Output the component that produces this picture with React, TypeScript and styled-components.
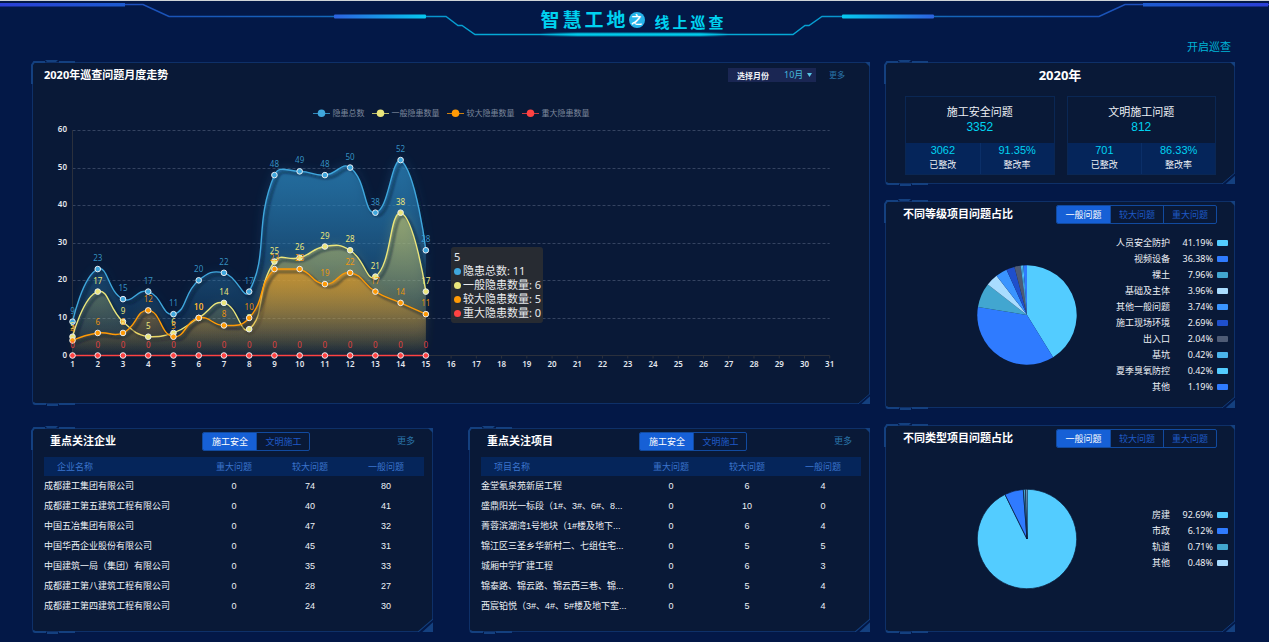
import React, { useState } from "react";
import styled, { createGlobalStyle, css } from "styled-components";

const cjk = `"Noto Sans", "Noto Sans CJK SC", sans-serif`;
const arial = `"Liberation Sans", "Noto Sans CJK SC", sans-serif`;

const color = {
  page: "#031847",
  panel: "#091937",
  edge: "#0e3068",
  accent: "#14407f",
  primary: "#1660d6",
  outline: "#114a9f",
  band: "#05255a",
  cyan: "#00d2f0",
  link: "#2a74a8",
  text: "#eef1f6",
};

const GlobalStyle = createGlobalStyle`
  *, *::before, *::after { box-sizing: border-box; }
  body {
    margin: 0;
    background: ${color.page};
    color: ${color.text};
    font-family: ${cjk};
    font-size: 9px;
  }
  h1, h2, ul, p { margin: 0; padding: 0; }
  ul { list-style: none; }
  a { text-decoration: none; }
  button, select { font-family: inherit; }
`;

/* ---------- page header ---------- */

const Header = styled.header`
  position: relative;
  height: 38px;
  border-top: 1px solid #cfd4d8;
`;

const HeaderLines = styled.svg`
  position: absolute;
  top: -1px;
  left: 0;
  width: 100%;
  height: 44px;
`;

const SiteTitle = styled.h1`
  position: relative;
  display: flex;
  justify-content: center;
  align-items: center;
  height: 38px;
  padding-right: 2px;
  color: ${color.cyan};
  font-size: 19px;
  line-height: 38px;
  font-weight: 700;
  letter-spacing: 3px;
`;

const Badge = styled.span`
  width: 16px;
  height: 16px;
  border-radius: 50%;
  background: #27b4ea;
  color: #fff;
  font-size: 11px;
  line-height: 15px;
  letter-spacing: 0;
  text-align: center;
`;

const SubTitle = styled.span`
  margin-left: 10px;
  padding-top: 3px;
  font-size: 15px;
`;

const TopNav = styled.nav`
  display: flex;
  justify-content: flex-end;
  height: 24px;
  padding: 0 38px;
`;

const StartLink = styled.a`
  color: #00b4d6;
  font-size: 11px;
  line-height: 18px;
`;

/* ---------- layout ---------- */

const Main = styled.main`
  display: grid;
  grid-template-columns: minmax(0, 838fr) minmax(0, 350fr);
  gap: 15px;
  padding: 0 34px 10px 32px;
`;

const LeftColumn = styled.div`
  display: flex;
  flex-direction: column;
  gap: 24px;
`;

const RightColumn = styled.div`
  display: flex;
  flex-direction: column;
  gap: 17px;
`;

const TablePair = styled.div`
  display: grid;
  grid-template-columns: repeat(2, minmax(0, 1fr));
  gap: 36px;
`;

/* ---------- panel ---------- */

const PanelBox = styled.section<{ $grow?: boolean }>`
  position: relative;
  display: flex;
  flex-direction: column;
  border-radius: 3px;
  background: ${color.panel};
  box-shadow: inset 0 0 0 1px ${color.edge};
  ${(p) => p.$grow && css`flex: 1;`}
`;

const Ornament = styled.svg<{ $at: "top" | "bottom" | "tip" | "cut" }>`
  position: absolute;
  pointer-events: none;
  ${(p) =>
    ({
      top: "top: -3px; left: -1px;",
      bottom: "bottom: -3px; left: 0;",
      tip: "top: 0; right: 0;",
      cut: "bottom: 0; right: 0;",
    })[p.$at]}
`;

function Panel({
  children,
  grow,
  cut = 12,
}: {
  children: React.ReactNode;
  grow?: boolean;
  cut?: number;
}) {
  return (
    <PanelBox $grow={grow}>
      <Ornament $at="top" width="50" height="28" aria-hidden>
        <path
          d="M1 25V6l2-3H14M28 3H44"
          fill="none"
          stroke={color.accent}
          strokeWidth="2"
        />
        <path d="M14 1H27L25 3H16Z" fill={color.accent} />
      </Ornament>
      <Ornament $at="bottom" width="48" height="6" aria-hidden>
        <path d="M1 2l2 1H14M27 3H43" fill="none" stroke={color.accent} strokeWidth="2" />
        <path d="M15 3H26V5H15Z" fill={color.accent} />
      </Ornament>
      <Ornament $at="tip" width="5" height="5" aria-hidden>
        <path d="M0 0H5V5Z" fill={color.accent} />
      </Ornament>
      {children}
      <Ornament $at="cut" width={cut} height={cut} viewBox="0 0 14 14" aria-hidden>
        <path d="M0 14L14 2V14Z" fill={color.page} />
        <path d="M0 14L14 2" stroke={color.accent} fill="none" />
        <path d="M4 14L14 5V14Z" fill={color.accent} />
      </Ornament>
    </PanelBox>
  );
}

const PanelHead = styled.div<{ $wide?: boolean }>`
  display: flex;
  align-items: center;
  justify-content: space-between;
  height: 26px;
  padding: ${(p) => (p.$wide ? "0 25px 0 12px" : "0 18px")};
`;

const PanelTitle = styled.h2`
  color: #fff;
  font-size: 11px;
  line-height: 18px;
  font-weight: 700;
`;

const MoreLink = styled.a<{ $small?: boolean }>`
  color: ${color.link};
  font-size: ${(p) => (p.$small ? 8 : 9)}px;
  line-height: 14px;
`;

const TabGroup = styled.div`
  display: flex;
  height: 19px;
  border: 1px solid ${color.outline};
  border-radius: 2px;
  overflow: hidden;
`;

const Tab = styled.button<{ $active: boolean }>`
  width: 53px;
  padding: 0;
  border: 0;
  border-left: 1px solid ${color.outline};
  background: ${(p) => (p.$active ? color.primary : "transparent")};
  color: ${(p) => (p.$active ? "#fff" : "#1f5ac6")};
  font-size: 9px;
  line-height: 17px;
  &:first-child {
    border-left: 0;
  }
`;

function Tabs({ items, label }: { items: string[]; label: string }) {
  const [active, setActive] = useState(0);
  return (
    <TabGroup role="group" aria-label={label}>
      {items.map((t, i) => (
        <Tab
          key={t}
          type="button"
          $active={i === active}
          aria-pressed={i === active}
          onClick={() => setActive(i)}
        >
          {t}
        </Tab>
      ))}
    </TabGroup>
  );
}

/* ---------- trend chart ---------- */

const HeadTools = styled.div`
  display: flex;
  align-items: center;
  gap: 13px;
`;

const MonthField = styled.div`
  position: relative;
  display: flex;
  align-items: center;
  justify-content: space-between;
  width: 88px;
  height: 14px;
  padding-left: 9px;
  background: #1a2653;
`;

const MonthLabel = styled.label`
  color: #f2f4f8;
  font-size: 8px;
  font-weight: 700;
`;

const MonthSelect = styled.select`
  appearance: none;
  width: 32px;
  height: 14px;
  padding: 0;
  border: 0;
  background: transparent;
  color: #45b8dc;
  font-size: 9px;
  line-height: 14px;
`;

const Caret = styled.svg`
  position: absolute;
  top: 5px;
  right: 4px;
  pointer-events: none;
`;

const LegendRow = styled.ul`
  display: flex;
  justify-content: center;
  gap: 7px;
  height: 14px;
  margin-top: 18px;
  color: #7c879c;
  font-size: 8px;
  line-height: 14px;
`;

const LegendItem = styled.li`
  display: flex;
  align-items: center;
  gap: 3px;
`;

const ChartArea = styled.div`
  position: relative;
  padding-bottom: 24px;
`;

const ChartSvg = styled.svg`
  display: block;
  width: 100%;
  height: auto;
  font-family: ${cjk};
  font-size: 8px;
`;

const Tooltip = styled.div`
  position: absolute;
  top: 127px;
  left: 50%;
  padding: 3px 2px 3px 3px;
  border-radius: 3px;
  background: rgba(44, 46, 50, 0.86);
  color: #e8eaed;
  font-size: 11px;
  line-height: 14px;
  white-space: nowrap;
`;

const TipRow = styled.p`
  display: flex;
  align-items: center;
  gap: 2px;
`;

const Dot = styled.span<{ $color: string }>`
  width: 7px;
  height: 7px;
  border-radius: 50%;
  background: ${(p) => p.$color};
`;

const series = [
  {
    name: "隐患总数",
    color: "#3fa7dd",
    top: "#2c88c0",
    opacity: 0.7,
    labelOpacity: 0.85,
    tip: 11,
    data: [9, 23, 15, 17, 11, 20, 22, 17, 48, 49, 48, 50, 38, 52, 28],
  },
  {
    name: "一般隐患数量",
    color: "#ebe67b",
    top: "#d9cf62",
    opacity: 0.54,
    labelOpacity: 1,
    tip: 6,
    data: [5, 17, 9, 5, 6, 10, 14, 7, 25, 26, 29, 28, 21, 38, 17],
  },
  {
    name: "较大隐患数量",
    color: "#ff9a05",
    top: "#e8981c",
    opacity: 0.62,
    labelOpacity: 0.9,
    tip: 5,
    data: [4, 6, 6, 12, 5, 10, 8, 10, 23, 23, 19, 22, 17, 14, 11],
  },
  {
    name: "重大隐患数量",
    color: "#ff4242",
    top: "#ff4242",
    opacity: 0,
    labelOpacity: 0.85,
    tip: 0,
    data: [0, 0, 0, 0, 0, 0, 0, 0, 0, 0, 0, 0, 0, 0, 0],
  },
];

const plot = { left: 40.5, step: 25.24, base: 235.5, top: 10, right: 797.7 };
const px = (i: number) => plot.left + i * plot.step;
const py = (v: number) => plot.base - (v * (plot.base - plot.top)) / 60;

/* Smooth curve through the points, with handles kept inside the series' bounds. */
function smoothPath(data: number[]) {
  const pts = data.map((v, i) => [px(i), py(v)]);
  const ys = pts.map((p) => p[1]);
  const lo = Math.min(...ys);
  const hi = Math.max(...ys);
  const clamp = (y: number) => Math.max(lo, Math.min(hi, y));
  const f = (n: number) => n.toFixed(2);
  let d = `M${f(pts[0][0])} ${f(pts[0][1])}`;
  let out = pts[0];
  for (let i = 1; i < pts.length; i++) {
    const prev = pts[i - 1];
    const p = pts[i];
    const next = pts[i + 1];
    let inn = p;
    let nextOut = p;
    if (next) {
      const v = [next[0] - prev[0], next[1] - prev[1]];
      const a = Math.hypot(p[0] - prev[0], p[1] - prev[1]);
      const b = Math.hypot(next[0] - p[0], next[1] - p[1]);
      const r = b / (a + b);
      inn = [p[0] - v[0] * 0.5 * (1 - r), clamp(p[1] - v[1] * 0.5 * (1 - r))];
      nextOut = [p[0] + v[0] * 0.5 * r, clamp(p[1] + v[1] * 0.5 * r)];
    }
    d += `C${f(out[0])} ${f(out[1])} ${f(inn[0])} ${f(inn[1])} ${f(p[0])} ${f(p[1])}`;
    out = nextOut;
  }
  return d;
}

function TrendChart() {
  return (
    <ChartSvg viewBox="0 0 838 260" role="img" aria-label="2020年巡查问题月度走势">
      <defs>
        {series.map((s, i) => (
          <linearGradient key={s.name} id={`fill${i}`} x1="0" y1="0" x2="0" y2="1">
            <stop offset="0" stopColor={s.top} stopOpacity={s.opacity} />
            <stop offset="1" stopColor={s.top} stopOpacity="0.02" />
          </linearGradient>
        ))}
        <filter id="glow" x="-10%" y="-20%" width="120%" height="140%">
          <feGaussianBlur stdDeviation="6" />
        </filter>
        <filter id="soft" x="-5%" y="-10%" width="110%" height="120%">
          <feGaussianBlur stdDeviation="0.8" />
        </filter>
      </defs>
      {[10, 20, 30, 40, 50, 60].map((v) => (
        <line
          key={v}
          x1={plot.left}
          x2={plot.right}
          y1={Math.round(py(v)) + 0.5}
          y2={Math.round(py(v)) + 0.5}
          stroke="#344360"
          strokeDasharray="3 2"
        />
      ))}
      <path
        d={`M${plot.left} ${plot.top}V${plot.base}H${plot.right}`}
        fill="none"
        stroke="#2b303c"
      />
      {Array.from({ length: 31 }, (_, i) => (
        <line
          key={i}
          x1={px(i)}
          x2={px(i)}
          y1={plot.base}
          y2={plot.base + 3}
          stroke="#2b303c"
        />
      ))}
      <g fill="#e3e7ee" fontWeight="600">
        {[0, 10, 20, 30, 40, 50, 60].map((v) => (
          <text key={v} x="35" y={py(v) + 2} textAnchor="end">
            {v}
          </text>
        ))}
        {Array.from({ length: 31 }, (_, i) => (
          <text key={i} x={px(i)} y="247" textAnchor="middle">
            {i + 1}
          </text>
        ))}
      </g>
      {series.map((s, i) => {
        const line = smoothPath(s.data);
        const area = `${line}V${plot.base}H${plot.left}Z`;
        return (
          <g key={s.name}>
            {s.opacity > 0 && (
              <>
                <path d={area} fill={`url(#fill${i})`} filter="url(#glow)" opacity="0.4" />
                <path d={area} fill={`url(#fill${i})`} />
                <path
                  d={line}
                  transform="translate(3 3)"
                  fill="none"
                  stroke="#081430"
                  strokeOpacity="0.55"
                  strokeWidth="2"
                  filter="url(#soft)"
                />
              </>
            )}
            <path d={line} fill="none" stroke={s.color} strokeWidth="1.4" />
          </g>
        );
      })}
      {series.map((s) => (
        <g key={s.name} textAnchor="middle">
          {s.data.map((v, i) => (
            <g key={i}>
              <circle
                cx={px(i)}
                cy={py(v)}
                r="2.8"
                fill={s.color}
                stroke="#e9edf2"
                strokeWidth="1"
              />
              <text x={px(i)} y={py(v) - 8} fill={s.color} fillOpacity={s.labelOpacity}>
                {v}
              </text>
            </g>
          ))}
        </g>
      ))}
    </ChartSvg>
  );
}

/* ---------- tables ---------- */

const DataTable = styled.table`
  width: calc(100% - 21px);
  margin: 3px 9px 16px 12px;
  border-collapse: collapse;
  table-layout: fixed;
  font-family: ${arial};
  font-size: 9px;
`;

const HeadCell = styled.th<{ $first?: boolean }>`
  width: ${(p) => (p.$first ? "40%" : "20%")};
  height: 19px;
  padding: 0 0 0 ${(p) => (p.$first ? 13 : 0)}px;
  background: ${color.band};
  color: #3b74cc;
  font-weight: 400;
  text-align: ${(p) => (p.$first ? "left" : "center")};
`;

const Cell = styled.td<{ $first?: boolean }>`
  height: 20px;
  padding: 0;
  color: ${color.text};
  line-height: 14px;
  text-align: ${(p) => (p.$first ? "left" : "center")};
  white-space: nowrap;
`;

type Row = [string, number, number, number];

const companies: Row[] = [
  ["成都建工集团有限公司", 0, 74, 80],
  ["成都建工第五建筑工程有限公司", 0, 40, 41],
  ["中国五冶集团有限公司", 0, 47, 32],
  ["中国华西企业股份有限公司", 0, 45, 31],
  ["中国建筑一局（集团）有限公司", 0, 35, 33],
  ["成都建工第八建筑工程有限公司", 0, 28, 27],
  ["成都建工第四建筑工程有限公司", 0, 24, 30],
];

const projects: Row[] = [
  ["金堂氡泉苑新居工程", 0, 6, 4],
  ["盛鼎阳光一标段（1#、3#、6#、8...", 0, 10, 0],
  ["菁蓉滨湖湾1号地块（1#楼及地下...", 0, 6, 4],
  ["锦江区三圣乡华新村二、七组住宅...", 0, 5, 5],
  ["城厢中学扩建工程", 0, 6, 3],
  ["锦泰路、锦云路、锦云西三巷、锦...", 0, 5, 4],
  ["西宸铂悦（3#、4#、5#楼及地下室...", 0, 5, 4],
];

function FocusTable({ title, nameLabel, rows }: { title: string; nameLabel: string; rows: Row[] }) {
  return (
    <Panel cut={15}>
      <PanelHead>
        <PanelTitle>{title}</PanelTitle>
        <Tabs items={["施工安全", "文明施工"]} label={title} />
        <MoreLink href="#more">更多</MoreLink>
      </PanelHead>
      <DataTable>
        <thead>
          <tr>
            <HeadCell scope="col" $first>
              {nameLabel}
            </HeadCell>
            <HeadCell scope="col">重大问题</HeadCell>
            <HeadCell scope="col">较大问题</HeadCell>
            <HeadCell scope="col">一般问题</HeadCell>
          </tr>
        </thead>
        <tbody>
          {rows.map(([name, ...counts]) => (
            <tr key={name}>
              <Cell $first>{name}</Cell>
              {counts.map((c, i) => (
                <Cell key={i}>{c}</Cell>
              ))}
            </tr>
          ))}
        </tbody>
      </DataTable>
    </Panel>
  );
}

/* ---------- yearly figures ---------- */

const YearTitle = styled.h2`
  padding-top: 3px;
  color: #fff;
  font-size: 13px;
  line-height: 20px;
  font-weight: 700;
  text-align: center;
`;

const CardRow = styled.div`
  display: grid;
  grid-template-columns: 1fr 1fr;
  gap: 12px;
  padding: 11px 19px 9px 20px;
`;

const Card = styled.div`
  border: 1px solid #0a2754;
  text-align: center;
  font-family: ${arial};
`;

const CardTop = styled.div`
  height: 46px;
  padding-top: 7px;
  font-size: 11px;
  line-height: 16px;
`;

const CardTotal = styled.p`
  color: ${color.cyan};
  font-size: 12px;
  line-height: 15px;
`;

const CardFoot = styled.div`
  display: grid;
  grid-template-columns: 1fr 1fr;
  background: ${color.band};
`;

const Figure = styled.div`
  height: 31px;
  font-size: 9px;
  line-height: 16px;
  & + & {
    border-left: 1px solid #0b2f68;
  }
`;

const FigureValue = styled.p`
  color: ${color.cyan};
  font-size: 11px;
  line-height: 14px;
`;

const cards = [
  { name: "施工安全问题", total: "3352", fixed: "3062", rate: "91.35%" },
  { name: "文明施工问题", total: "812", fixed: "701", rate: "86.33%" },
];

/* ---------- pies ---------- */

const PieBody = styled.div`
  display: flex;
  flex: 1;
  align-items: center;
  justify-content: flex-end;
  padding-right: 7px;
  margin-top: -5px;
`;

const PieSvg = styled.svg`
  flex: none;
  width: 100px;
  height: 100px;
`;

const PieLegend = styled.ul`
  width: 151px;
`;

const PieLegendItem = styled.li`
  display: grid;
  grid-template-columns: 1fr 39px 11px;
  column-gap: 4px;
  align-items: center;
  font-size: 9px;
  line-height: 16px;
  text-align: right;
`;

const Swatch = styled.span<{ $color: string }>`
  height: 6px;
  border-radius: 1px;
  background: ${(p) => p.$color};
`;

type Slice = { name: string; value: number; color: string };

const byLevel: Slice[] = [
  { name: "人员安全防护", value: 41.19, color: "#53ccff" },
  { name: "视频设备", value: 36.38, color: "#2f7bff" },
  { name: "裸土", value: 7.96, color: "#42a6d0" },
  { name: "基础及主体", value: 3.96, color: "#a9dcff" },
  { name: "其他一般问题", value: 3.74, color: "#3a94ff" },
  { name: "施工现场环境", value: 2.69, color: "#1f4fcc" },
  { name: "出入口", value: 2.04, color: "#4e5b75" },
  { name: "基坑", value: 0.42, color: "#4bb4ea" },
  { name: "夏季臭氧防控", value: 0.42, color: "#53ccff" },
  { name: "其他", value: 1.19, color: "#2f7bff" },
];

const byType: Slice[] = [
  { name: "房建", value: 92.69, color: "#53ccff" },
  { name: "市政", value: 6.12, color: "#2f7bff" },
  { name: "轨道", value: 0.71, color: "#42a6d0" },
  { name: "其他", value: 0.48, color: "#a9dcff" },
];

function Pie({ slices, divided }: { slices: Slice[]; divided?: boolean }) {
  const total = slices.reduce((s, x) => s + x.value, 0);
  let acc = 0;
  const at = (v: number) => {
    const a = (v / total) * Math.PI * 2;
    return `${(50 + 49.7 * Math.sin(a)).toFixed(2)} ${(50 - 49.7 * Math.cos(a)).toFixed(2)}`;
  };
  return (
    <PieSvg viewBox="0 0 100 100" aria-hidden>
      {slices.map((s) => {
        const from = at(acc);
        acc += s.value;
        return (
          <path
            key={s.name}
            d={`M50 50L${from}A49.7 49.7 0 ${s.value > total / 2 ? 1 : 0} 1 ${at(acc)}Z`}
            fill={s.color}
            stroke={divided ? color.panel : "none"}
            strokeWidth="0.7"
          />
        );
      })}
    </PieSvg>
  );
}

function PiePanel({ title, slices, divided }: { title: string; slices: Slice[]; divided?: boolean }) {
  return (
    <Panel grow cut={13}>
      <PanelHead>
        <PanelTitle>{title}</PanelTitle>
        <Tabs items={["一般问题", "较大问题", "重大问题"]} label={title} />
      </PanelHead>
      <PieBody>
        <Pie slices={slices} divided={divided} />
        <PieLegend>
          {slices.map((s) => (
            <PieLegendItem key={s.name}>
              <span>{s.name}</span>
              <span>{s.value.toFixed(2)}%</span>
              <Swatch $color={s.color} />
            </PieLegendItem>
          ))}
        </PieLegend>
      </PieBody>
    </Panel>
  );
}

/* ---------- page ---------- */

function HeaderDecor() {
  return (
    <HeaderLines viewBox="0 0 1269 44" preserveAspectRatio="none" aria-hidden>
      <defs>
        <linearGradient id="wire" gradientUnits="userSpaceOnUse" x1="0" y1="0" x2="1269" y2="0">
          <stop offset="0" stopColor="#2b45d8" />
          <stop offset="0.13" stopColor="#1a53b8" />
          <stop offset="0.25" stopColor="#1464b8" />
          <stop offset="0.38" stopColor="#04a9d6" />
          <stop offset="0.62" stopColor="#04a9d6" />
          <stop offset="0.75" stopColor="#1464b8" />
          <stop offset="0.87" stopColor="#1a53b8" />
          <stop offset="1" stopColor="#2b45d8" />
        </linearGradient>
        <linearGradient id="outer" gradientUnits="userSpaceOnUse" x1="0" y1="0" x2="124" y2="0">
          <stop offset="0" stopColor="#2b3fd6" />
          <stop offset="1" stopColor="#1d5bd0" />
        </linearGradient>
        <linearGradient id="inner" gradientUnits="userSpaceOnUse" x1="335" y1="0" x2="426" y2="0">
          <stop offset="0" stopColor="#2c63e0" />
          <stop offset="1" stopColor="#06c8ee" />
        </linearGradient>
        <linearGradient id="beam" gradientUnits="userSpaceOnUse" x1="540" y1="0" x2="728" y2="0">
          <stop offset="0" stopColor="#00d8f5" stopOpacity="0" />
          <stop offset="0.2" stopColor="#00d8f5" />
          <stop offset="0.85" stopColor="#00d8f5" />
          <stop offset="1" stopColor="#00d8f5" stopOpacity="0" />
        </linearGradient>
        <g id="bars">
          <rect x="0" y="3" width="125" height="3.500" fill="url(#outer)" />
          <rect x="334" y="14.500" width="92" height="4" rx="1" fill="url(#inner)" />
        </g>
      </defs>
      <path
        d="M0 4.5H143L169 16.5H446L458 25.5H462L475 34.5H793L805 25.5H809L822 16.5H1099L1125 4.5H1269"
        fill="none"
        stroke="url(#wire)"
        strokeWidth="1.4"
      />
      <use href="#bars" />
      <use href="#bars" transform="translate(1268 0) scale(-1 1)" />
      <rect x="540" y="32" width="188" height="5" fill="url(#beam)" opacity="0.3" />
      <rect x="540" y="33" width="188" height="3" fill="url(#beam)" opacity="0.6" />
    </HeaderLines>
  );
}

export default function App() {
  const [month, setMonth] = useState("10");
  return (
    <>
      <GlobalStyle />
      <Header>
        <HeaderDecor />
        <SiteTitle>
          智慧工地<Badge>之</Badge>
          <SubTitle>线上巡查</SubTitle>
        </SiteTitle>
      </Header>
      <TopNav>
        <StartLink href="#start">开启巡查</StartLink>
      </TopNav>
      <Main>
        <LeftColumn>
          <Panel>
            <PanelHead $wide>
              <PanelTitle>2020年巡查问题月度走势</PanelTitle>
              <HeadTools>
                <MonthField>
                  <MonthLabel htmlFor="month">选择月份</MonthLabel>
                  <MonthSelect id="month" value={month} onChange={(e) => setMonth(e.target.value)}>
                    {Array.from({ length: 12 }, (_, i) => (
                      <option key={i} value={String(i + 1)}>
                        {i + 1}月
                      </option>
                    ))}
                  </MonthSelect>
                  <Caret width="5" height="4" aria-hidden>
                    <path d="M0 0H5L2.500 4Z" fill="#58c4e4" />
                  </Caret>
                </MonthField>
                <MoreLink $small href="#more">
                  更多
                </MoreLink>
              </HeadTools>
            </PanelHead>
            <LegendRow>
              {series.map((s) => (
                <LegendItem key={s.name}>
                  <svg width="17" height="8" aria-hidden>
                    <path d="M0 4.500H17" stroke={s.color} strokeOpacity="0.8" />
                    <circle cx="8.500" cy="4.200" r="3.800" fill={s.color} />
                  </svg>
                  {s.name}
                </LegendItem>
              ))}
            </LegendRow>
            <ChartArea>
              <TrendChart />
              <Tooltip role="tooltip">
                <p>5</p>
                {series.map((s) => (
                  <TipRow key={s.name}>
                    <Dot $color={s.color} />
                    {s.name}: {s.tip}
                  </TipRow>
                ))}
              </Tooltip>
            </ChartArea>
          </Panel>
          <TablePair>
            <FocusTable title="重点关注企业" nameLabel="企业名称" rows={companies} />
            <FocusTable title="重点关注项目" nameLabel="项目名称" rows={projects} />
          </TablePair>
        </LeftColumn>
        <RightColumn>
          <Panel cut={13}>
            <YearTitle>2020年</YearTitle>
            <CardRow>
              {cards.map((c) => (
                <Card key={c.name}>
                  <CardTop>
                    <p>{c.name}</p>
                    <CardTotal>{c.total}</CardTotal>
                  </CardTop>
                  <CardFoot>
                    <Figure>
                      <FigureValue>{c.fixed}</FigureValue>
                      <p>已整改</p>
                    </Figure>
                    <Figure>
                      <FigureValue>{c.rate}</FigureValue>
                      <p>整改率</p>
                    </Figure>
                  </CardFoot>
                </Card>
              ))}
            </CardRow>
          </Panel>
          <PiePanel title="不同等级项目问题占比" slices={byLevel} />
          <PiePanel title="不同类型项目问题占比" slices={byType} divided />
        </RightColumn>
      </Main>
    </>
  );
}
